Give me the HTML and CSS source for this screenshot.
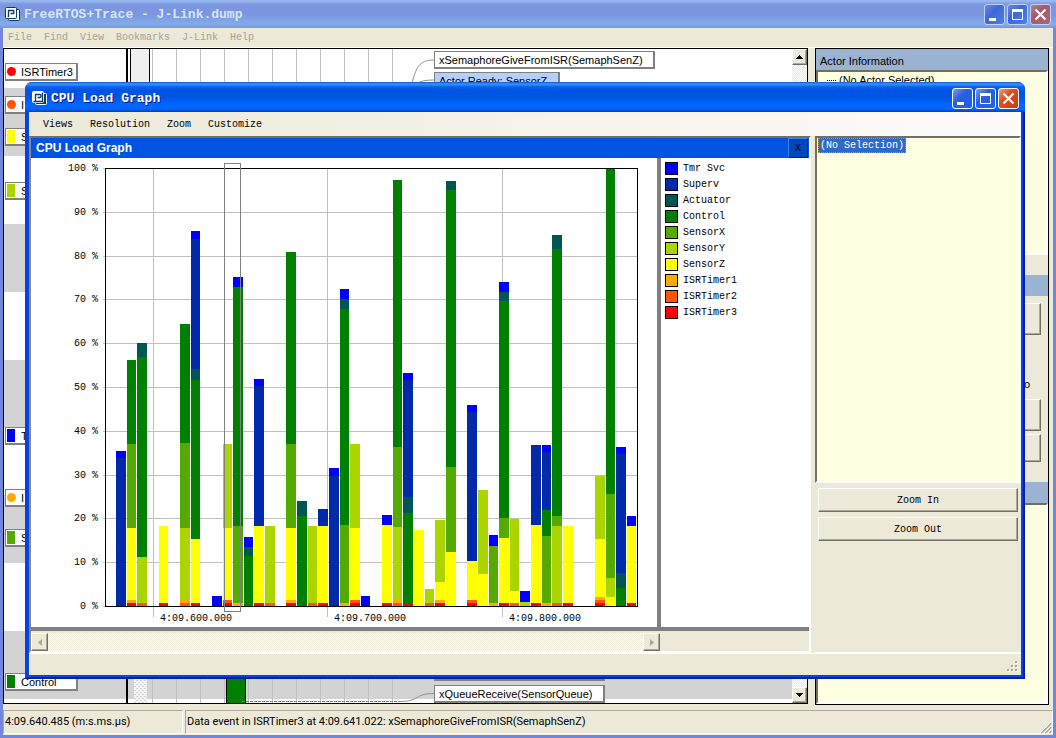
FILE: index.html
```html
<!DOCTYPE html>
<html lang="en">
<head>
<meta charset="utf-8">
<title>FreeRTOS+Trace - J-Link.dump</title>
<link rel="stylesheet" href="styles.css">
</head>
<body>
<div class="app">
  <header class="titlebar titlebar-inactive">
    <svg class="app-icon" viewBox="0 0 15 15"><rect x="3.500" y="2.500" width="11" height="11" rx="1" fill="#fff" stroke="#0a3a6a"/><rect x="0.500" y="0.500" width="11" height="11" rx="1" fill="#fff" stroke="#0a3a6a"/><path d="M3.500 10V3.500H8Q9 3.500 9 5T8 6.500H5.500" fill="none" stroke="#0a3a6a" stroke-width="1.400"/></svg>
    <h1 class="title">FreeRTOS+Trace - J-Link.dump</h1>
    <div class="window-controls">
      <button class="ctl" aria-label="Minimize"><svg viewBox="0 0 21 21"><path d="M5 14h7v3H5z" fill="#fff"/></svg></button>
      <button class="ctl" aria-label="Maximize"><svg viewBox="0 0 21 21"><path d="M5.500 5v10.500h10V5" fill="none" stroke="#fff"/><path d="M5 5h11v3H5z" fill="#fff"/></svg></button>
      <button class="ctl ctl-close" aria-label="Close"><svg viewBox="0 0 21 21"><path d="M5.500 5.500l10 10M15.500 5.500l-10 10" stroke="#fff" stroke-width="2.200"/></svg></button>
    </div>
  </header>
  <nav class="menubar menubar-disabled">
    <button>File</button><button>Find</button><button>View</button><button>Bookmarks</button><button>J-Link</button><button>Help</button>
  </nav>
  <main class="workspace">
    <section class="trace">
      <div class="timeline">
        <svg class="timeline-art" width="789" height="655" viewBox="4 49 789 655">
          <defs>
            <pattern id="dots" width="4" height="4" patternUnits="userSpaceOnUse"><rect width="4" height="4" fill="#f4f4f4"/><path d="M0 0h2v1H0zM2 2h2v1H2z" fill="#d3d3d3"/></pattern>
          </defs>
          <rect x="4" y="49" width="789" height="655" fill="#fff"/>
          <g fill="#d3d3d3"><path d="M4 88h789v68H4zM4 224h789v68H4zM4 360h789v68H4zM4 495h789v68H4zM4 631h789v68H4z"/></g>
          <path d="M152.500 49v655M176.500 49v655M200.500 49v655M224.500 49v655M248.500 49v655M272.500 49v655M296.500 49v655M320.500 49v655M344.500 49v655M368.500 49v655M392.500 49v655" stroke="#c0c0c0"/>
          <rect x="126" y="49" width="2" height="655"/>
          <rect x="130.500" y="40" width="19" height="80" fill="#f0f0f0" stroke="#000"/>
          <rect x="134" y="600" width="13" height="104" fill="url(#dots)"/>
          <rect x="226.500" y="600" width="19" height="110" fill="#008000" stroke="#000"/>
          <path d="M242 701.500H400" stroke="#808080" stroke-dasharray="3 1" fill="none"/>
          <path d="M400 701.500c20 0 14-8 34-8M412 83c4-14 6-23 22-23M418 83q4-3 16-3" stroke="#909090" fill="none"/>
          <text class="ruler" x="727" y="711">4:09.850.000</text>
        </svg>
        <div class="actor a1"><i class="dot red"></i>ISRTimer3</div>
        <div class="actor a2"><i class="dot orange"></i>I</div>
        <div class="actor a3"><i class="block yellow"></i>S</div>
        <div class="actor a4"><i class="block lime"></i>S</div>
        <div class="actor a5"><i class="block blue"></i>T</div>
        <div class="actor a6"><i class="dot amber"></i>I</div>
        <div class="actor a7"><i class="block leaf"></i>S</div>
        <div class="actor a8"><i class="block green"></i>Control</div>
        <div class="event e1">xSemaphoreGiveFromISR(SemaphSenZ)</div>
        <div class="event e2">Actor Ready: SensorZ</div>
        <div class="event e3"></div>
        <div class="event e4">xQueueReceive(SensorQueue)</div>
      </div>
      <div class="vscroll">
        <button aria-label="Scroll up"><svg width="7" height="4"><path d="M3 0h1v1h1v1h1v1h1v1H0V3h1V2h1V1h1z"/></svg></button>
        <button aria-label="Scroll down"><svg width="7" height="4"><path d="M0 0h7v1H6v1H5v1H4v1H3V3H2V2H1V1H0z"/></svg></button>
      </div>
    </section>
    <aside class="info">
      <h2 class="info-head">Actor Information</h2>
      <div class="info-tree">(No Actor Selected)</div>
      <div class="info-head info-gap"></div>
      <div class="info-actions">
        <button class="raised b1" aria-label="Previous"></button>
        <p class="goto">o</p>
        <button class="raised b1" aria-label="Next"></button>
        <button class="raised b2" aria-label="Find"></button>
      </div>
      <div class="info-head"></div>
      <div class="info-list"></div>
    </aside>
  </main>
  <footer class="statusbar">
    <span class="cell cell-time">4:09.640.485 (m:s.ms.µs)</span>
    <span class="cell cell-event">Data event in ISRTimer3 at 4:09.641.022: xSemaphoreGiveFromISR(SemaphSenZ)</span>
    <svg class="corner" width="13" height="13"><path d="M2 12L12 2M6 12l6-6M10 12l2-2" stroke="#aca899" stroke-width="2"/><path d="M1 12L12 1M5 12l7-7M9 12l3-3" stroke="#fff"/></svg>
  </footer>

  <section class="dialog" role="dialog" aria-labelledby="dialog-title">
    <header class="titlebar titlebar-active">
      <svg class="app-icon" viewBox="0 0 15 15"><rect x="3.500" y="2.500" width="11" height="11" rx="1" fill="#0a3a6a" stroke="#fff"/><rect x="0.500" y="0.500" width="11" height="11" rx="1" fill="#fff" stroke="#fff"/><path d="M3.500 10V3.500H8Q9 3.500 9 5T8 6.500H5.500M1.500 10.500H10.500V1.500" fill="none" stroke="#0a3a6a" stroke-width="1.300"/></svg>
      <h2 class="title" id="dialog-title">CPU Load Graph</h2>
      <div class="window-controls">
        <button class="ctl" aria-label="Minimize"><svg viewBox="0 0 21 21"><path d="M5 14h7v3H5z" fill="#fff"/></svg></button>
        <button class="ctl" aria-label="Maximize"><svg viewBox="0 0 21 21"><path d="M5.500 5v10.500h10V5" fill="none" stroke="#fff"/><path d="M5 5h11v3H5z" fill="#fff"/></svg></button>
        <button class="ctl ctl-close" aria-label="Close"><svg viewBox="0 0 21 21"><path d="M5.500 5.500l10 10M15.500 5.500l-10 10" stroke="#fff" stroke-width="2.200"/></svg></button>
      </div>
    </header>
    <nav class="menubar menubar-dialog">
      <button>Views</button><button>Resolution</button><button>Zoom</button><button>Customize</button>
    </nav>
    <div class="dialog-body">
      <div class="graph-pane">
        <div class="graph-head"><h3>CPU Load Graph</h3><button class="close-graph" aria-label="Close graph">X</button></div>
        <div class="graph-row">
          <svg class="chart" id="chart" width="626" height="469" viewBox="31 158 626 469" role="img" aria-label="CPU load over time"></svg>
          <ul class="legend">
            <li><i class="blue"></i>Tmr Svc</li>
            <li><i class="navy"></i>Superv</li>
            <li><i class="teal"></i>Actuator</li>
            <li><i class="green"></i>Control</li>
            <li><i class="leaf"></i>SensorX</li>
            <li><i class="lime"></i>SensorY</li>
            <li><i class="yellow"></i>SensorZ</li>
            <li><i class="amber"></i>ISRTimer1</li>
            <li><i class="orange"></i>ISRTimer2</li>
            <li><i class="red"></i>ISRTimer3</li>
          </ul>
        </div>
        <div class="hscroll">
          <button aria-label="Scroll left"><svg width="4" height="7"><path d="M4 0v7L0 3.500z" fill="#aca899"/></svg></button>
          <button aria-label="Scroll right"><svg width="4" height="7"><path d="M0 0v7l4-3.500z" fill="#aca899"/></svg></button>
        </div>
      </div>
      <div class="side">
        <div class="selection-list"><span class="selected">(No Selection)</span></div>
        <button class="raised zoom">Zoom In</button>
        <button class="raised zoom">Zoom Out</button>
      </div>
    </div>
    <div class="dialog-status">
      <svg width="12" height="12"><path d="M9 1h2v2H9zM5 5h2v2H5zM9 5h2v2H9zM1 9h2v2H1zM5 9h2v2H5zM9 9h2v2H9z" fill="#fff"/><path d="M8 0h2v2H8zM4 4h2v2H4zM8 4h2v2H8zM0 8h2v2H0zM4 8h2v2H4zM8 8h2v2H8z" fill="#aca899"/></svg>
    </div>
  </section>
</div>
<script src="chart.js"></script>
</body>
</html>
```
FILE: styles.css
```css
* { box-sizing: border-box; }
html, body { height: 100%; margin: 0; }
body { font-family: "Liberation Sans", Arial, sans-serif; font-size: 11px; color: #000; overflow: hidden; }
button { font: inherit; color: inherit; margin: 0; padding: 0; border: 0; background: none; }
h1, h2, h3, p, ul { margin: 0; padding: 0; font-weight: normal; font-size: inherit; }
svg { display: block; flex: none; }

.red { background: #ff0000; }
.orange { background: #ff5500; }
.amber { background: #ffaa00; }
.yellow { background: #ffff00; }
.lime { background: #aad500; }
.leaf { background: #55aa00; }
.green { background: #008000; }
.teal { background: #005555; }
.navy { background: #002aaa; }
.blue { background: #0000ff; }

.app { position: relative; height: 100%; display: flex; flex-direction: column; background: #ece9d8; border: 3px solid #7386de; border-top: 0; }

.titlebar { display: flex; align-items: center; flex: none; }
.titlebar-inactive { height: 28px; margin: 0 -3px; padding: 0 5px 0 5px; color: #d8e4f8; background: linear-gradient(#9ab8f0 0, #9ab8f0 1px, #7b98e0 4px, #7a96df 14px, #82a9e8 23px, #82a9e8 25px, #7b92dc 28px); }
.titlebar-active { height: 30px; margin: 0 -4px; padding: 2px 6px 0 7px; border-radius: 7px 7px 0 0; color: #fff; text-shadow: 1px 1px #0a1883; background: linear-gradient(#0c56d8 0, #3b94ff 2px, #0a60ea 5px, #0054e3 8px, #0054e3 15px, #0066ff 22px, #0066ff 27px, #003cc8 30px); }
.app-icon { width: 15px; height: 15px; margin-right: 4px; }
.title { flex: 1; font: bold 13px "Liberation Mono", monospace; white-space: nowrap; }
.window-controls { display: flex; gap: 2px; }
.ctl { width: 21px; height: 21px; border: 1px solid #fff; border-radius: 3px; background: linear-gradient(135deg, #7a9cf0, #2a5fe0 40%, #1f60e8); }
.ctl svg { width: 21px; height: 21px; margin: -1px; }
.ctl-close { background: linear-gradient(135deg, #f0a080, #e04c22 40%, #c83c10); }
.titlebar-inactive .ctl { border-color: #c0d0f4; background: linear-gradient(135deg, #6a8ae0, #3f68d8 40%, #4a80e8); }
.titlebar-inactive .ctl-close { background: linear-gradient(135deg, #b08090, #a85868 40%, #a86878); }

.menubar { display: flex; flex: none; font: 10px "Liberation Mono", monospace; }
.menubar-disabled { height: 20px; gap: 12px; padding: 0 5px; color: #a5a293; border-bottom: 1px solid #fff; }
.menubar-dialog { height: 24px; gap: 17px; padding: 0 14px; background: linear-gradient(90deg, #ece9d8, #f4f2e8 45%, #fcfbfa); }

.workspace { flex: 1; min-height: 0; display: flex; gap: 7px; padding: 0 4px 0 0; }
.trace { flex: 1; min-width: 0; display: flex; margin-bottom: 2px; border: 1px solid #000; background: #fff; }
.timeline { position: relative; flex: 1; min-width: 0; overflow: hidden; }
.timeline-art { position: absolute; left: 0; top: 0; }
.ruler { font: 10px "Liberation Sans", Arial, sans-serif; fill: #808080; }
.actor { position: absolute; left: 1px; width: 73px; height: 18px; padding-left: 1px; display: flex; align-items: center; border: 1px solid #808080; border-width: 1px 2px 2px 1px; background: #fff; white-space: nowrap; }
.dot, .block { flex: none; }
.dot { width: 9px; height: 9px; margin-right: 5px; border-radius: 50%; }
.block { width: 8px; height: 13px; margin-right: 6px; }
.a1 { top: 14px; } .a2 { top: 47px; } .a3 { top: 79px; } .a4 { top: 133px; }
.a5 { top: 378px; } .a6 { top: 440px; } .a7 { top: 480px; } .a8 { top: 624px; }
.event { position: absolute; left: 430px; height: 18px; padding-left: 4px; line-height: 16px; border: 1px solid #808080; border-width: 1px 2px 2px 1px; background: #fff; white-space: nowrap; }
.e1 { top: 2px; width: 221px; }
.e2 { top: 23px; width: 126px; background: #b3cfff; }
.e3 { top: 614px; width: 171px; }
.e4 { top: 636px; width: 171px; }
.vscroll, .hscroll { background: repeating-conic-gradient(#fff 0 25%, #ece9d8 0 50%) 0 0 / 2px 2px; display: flex; justify-content: space-between; }
.vscroll { width: 15px; flex-direction: column; }
.vscroll button, .hscroll button, .raised { display: flex; align-items: center; justify-content: center; background: #ece9d8; border: 1px solid; border-color: #fff #716f64 #716f64 #fff; box-shadow: inset -1px -1px #aca899; }
.vscroll button { height: 16px; }

.info { width: 234px; flex: none; display: flex; flex-direction: column; margin-bottom: 1px; border: 1px solid #000; }
.info-head { height: 21px; flex: none; padding-left: 4px; line-height: 24px; background: #99b3d1; }
.info-tree, .info-list { border: 2px solid; border-color: #716f64 #fff #fff #716f64; background: #ffffe1; }
.info-tree { height: 185px; flex: none; padding-left: 21px; line-height: 16px; }
.info-tree::before { content: ""; display: inline-block; width: 9px; margin: 0 3px 3px -12px; border-top: 1px dotted #000; }
.info-gap { margin-top: 20px; }
.info-actions { height: 186px; flex: none; padding: 7px 7px 0 0; }
.info-actions .raised { width: 100%; }
.info-actions .b1 { height: 32px; }
.info-actions .b2 { height: 28px; margin-top: 3px; }
.goto { height: 64px; line-height: 98px; padding-right: 11px; text-align: right; }
.info-list { flex: 1; }

.statusbar { height: 29px; flex: none; position: relative; display: flex; gap: 2px; padding: 4px 0 1px; font-family: Roboto, "Liberation Sans", sans-serif; }
.cell { padding-left: 1px; line-height: 22px; white-space: nowrap; border: 1px solid; border-color: #aca899 #fff #fff #aca899; }
.cell-time { width: 180px; }
.cell-event { flex: 1; }
.corner { position: absolute; right: 1px; bottom: 1px; }

.dialog { position: absolute; left: 22px; right: 28px; top: 82px; bottom: 56px; display: flex; flex-direction: column; background: #ece9d8; border: 4px solid; border-color: transparent #001ea0 #001ea0 #0a3fd8; border-top: 0; border-radius: 7px 7px 0 0; }
.dialog::after { content: ""; position: absolute; inset: 30px -2px -2px -2px; border: 2px solid #0046e8; border-top: 0; pointer-events: none; }
.dialog-body { flex: 1; min-height: 0; display: flex; gap: 4px; }
.graph-pane { flex: 1; min-width: 0; display: flex; flex-direction: column; border: 2px solid; border-color: #716f64 #fff #fff #8c8a7e; }
.graph-head { height: 20px; flex: none; display: flex; justify-content: space-between; align-items: center; padding-left: 5px; background: #0054e3; color: #fff; }
.graph-head h3 { font-size: 12px; font-weight: bold; }
.close-graph { width: 20px; height: 20px; margin-right: 1px; color: #000; font: 10px "Liberation Mono", monospace; background: #0046bd; border: 1px solid; border-color: #3c80f0 #001e60 #001e60 #3c80f0; }
.graph-row { flex: 1; min-height: 0; display: flex; background: #fff; border-bottom: 4px solid #808080; }
.legend { flex: 1; list-style: none; padding: 2px 0 0 4px; border-left: 4px solid #808080; font: 10px "Liberation Mono", monospace; }
.legend li { display: flex; align-items: center; height: 16px; gap: 5px; }
.legend i { width: 13px; height: 13px; border: 1px solid #000; }
.chart text { font: 10px "Liberation Mono", monospace; fill: #000; }
.hscroll { height: 18px; flex: none; width: 629px; margin: 2px 0 0; }
.hscroll button { width: 17px; }

.side { width: 206px; flex: none; display: flex; flex-direction: column; gap: 5px; font: 10px "Liberation Mono", monospace; border-bottom: 1px solid #fff; }
.selection-list { height: 347px; border: 2px solid; border-color: #716f64 #fff #fff #716f64; background: #ffffe1; display: flex; align-items: flex-start; padding-left: 1px; }
.selected { height: 15px; padding: 0 1px; line-height: 13px; color: #fff; background: #316ac6; border: 1px dotted #c89030; }
.zoom { height: 24px; margin: 0 3px 0 3px; }
.dialog-status { height: 22px; flex: none; display: flex; justify-content: flex-end; align-items: flex-end; padding: 0 2px 2px 0; border-top: 1px solid #fff; }
```
FILE: chart.js
```js
// Stacked CPU load bars: [x, width, [colour key, top y] ... from the bottom up].
const COLORS = { R: "#ff0000", O: "#ff5500", A: "#ffaa00", Y: "#ffff00", L: "#aad500", S: "#55aa00", G: "#008000", T: "#005555", B: "#002aaa", U: "#0000ff" };
const BASE = 606;
const BARS = [
  [116, 10, "B458 U451"],
  [127, 9, "R603 A600 Y528 S444 G360"],
  [137, 10, "O603 L557 G357 T343"],
  [159, 9, "R603 Y526"],
  [180, 10, "O603 A600 L528 S443 G324"],
  [191, 9, "R603 Y539 G380 T369 B239 U231"],
  [212, 10, "U596"],
  [223, 9, "R603 O600 Y528 L444"],
  [233, 10, "A603 S526 G287 U277"],
  [244, 9, "G556 T547 U537"],
  [254, 10, "R603 Y526 B386 U379"],
  [265, 10, "O603 L526"],
  [286, 10, "R603 A600 Y528 S444 G252"],
  [297, 10, "G516 T501"],
  [308, 9, "O603 L526"],
  [318, 10, "R603 Y526 B509"],
  [329, 10, "B476 U468"],
  [340, 9, "A603 S525 G309 T299 U289"],
  [350, 10, "R603 O600 Y528 L444"],
  [361, 9, "U596"],
  [382, 10, "R603 Y525 U515"],
  [393, 9, "O603 A600 L527 S447 G180"],
  [403, 10, "R603 G513 T497 B380 U373"],
  [414, 10, "Y530"],
  [425, 9, "O603 L589"],
  [435, 10, "R603 A600 Y582 L520"],
  [446, 10, "Y552 S467 G190 T181"],
  [467, 10, "R603 O600 Y561 B412 U405"],
  [478, 10, "Y574 L490"],
  [489, 9, "A603 S546 U535"],
  [499, 10, "R603 Y538 S518 G301 T292 U282"],
  [510, 9, "O603 Y591 L519"],
  [520, 10, "L602 U591"],
  [531, 10, "R603 Y525 B445"],
  [542, 9, "A603 S536 G510 B452 U445"],
  [552, 10, "O603 L526 S516 G249 T235"],
  [563, 10, "R603 Y526"],
  [595, 10, "R603 O600 A597 Y539 L476"],
  [606, 9, "Y597 L578 S494 G169"],
  [616, 10, "G588 T573 B454 U447"],
  [627, 9, "R603 Y526 U516"]
];
const svg = document.getElementById("chart");
function add(name, attrs, text) {
  const el = document.createElementNS("http://www.w3.org/2000/svg", name);
  for (const key in attrs) el.setAttribute(key, attrs[key]);
  if (text) el.textContent = text;
  svg.appendChild(el);
}
const rect = (x, y, width, height, fill) => add("rect", { x, y, width, height, fill });

[168, 212, 256, 299, 343, 387, 431, 475, 518, 562, 606].forEach((y, i) => {
  rect(103, y, 534, 1, "#c0c0c0");
  add("text", { x: 98, y: y + 3, "text-anchor": "end" }, `${100 - i * 10} %`);
});
[[153, "4:09.600.000"], [327, "4:09.700.000"], [502, "4:09.800.000"]].forEach(([x, label]) => {
  rect(x, 168, 1, 449, "#c0c0c0");
  add("text", { x: x + 7, y: 621 }, label);
});
BARS.forEach(([x, width, stack]) => {
  let bottom = BASE;
  stack.split(" ").forEach(part => {
    const top = Number(part.slice(1));
    rect(x, top, width, bottom - top, COLORS[part[0]]);
    bottom = top;
  });
});
add("rect", { x: 105.5, y: 168.5, width: 532, height: 438, fill: "none", stroke: "#000" });
add("rect", { x: 224.5, y: 163.5, width: 16, height: 448, fill: "none", stroke: "#808080" });
```
